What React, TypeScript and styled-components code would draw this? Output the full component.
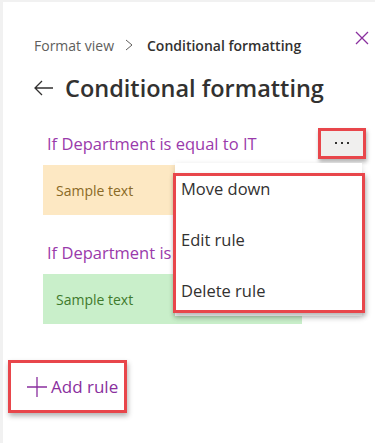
import styled, { createGlobalStyle } from "styled-components";

const Global = createGlobalStyle`
    html, body {
        margin: 0;
        padding: 0;
        background: #f1f1f1;
        font-family: "Open Sans", "Noto Sans", Arial, sans-serif;
    }
`;

const Panel = styled.div`
    position: relative;
    margin: 2px 0 0 3px;
    height: 441px;
    background: #ffffff;
    box-sizing: border-box;
    padding: 30px 0 0 0;
`;

const Crumbs = styled.div`
    display: flex;
    justify-content: space-between;
    align-items: flex-start;
    padding: 0 4px 0 31px;
`;

const Trail = styled.div`
    display: flex;
    align-items: center;
    height: 26px;
    font-size: 14px;
    color: #605e5c;
`;

const Current = styled.span`
    color: #323130;
    font-weight: 600;
`;

const Chevron = styled.svg`
    margin: 0 14px 0 11px;
`;

const Close = styled.button`
    border: none;
    background: none;
    padding: 0;
    margin-top: -1px;
    width: 16px;
    height: 16px;
    display: flex;
`;

const TitleRow = styled.div`
    display: flex;
    align-items: center;
    gap: 11px;
    margin-top: 13px;
    padding-left: 31px;
    height: 34px;
`;

const Title = styled.h1`
    margin: 0;
    font-size: 23.5px;
    font-weight: 600;
    color: #323130;
`;

const Rules = styled.div`
    position: relative;
    margin-top: 22px;
    padding-left: 40px;
`;

const Rule = styled.div`
    margin-bottom: 21px;
`;

const RuleHead = styled.div`
    display: flex;
    align-items: center;
    justify-content: space-between;
    height: 32px;
    padding-right: 9px;
`;

const RuleName = styled.span`
    padding-left: 4px;
    font-size: 16.5px;
    color: #9a3aab;
    white-space: nowrap;
`;

const More = styled.button`
    width: 48px;
    height: 31px;
    box-sizing: border-box;
    border: 3px solid #e8464b;
    background: #f0efee;
    box-shadow: 1px 3px 4px rgba(0, 0, 0, 0.3);
    display: flex;
    align-items: center;
    justify-content: center;
    gap: 4px;
    padding: 0;
`;

const Dot = styled.span`
    width: 2px;
    height: 2px;
    background: #323130;
`;

const Sample = styled.div<{ $bg: string; $fg: string }>`
    margin-top: 6px;
    width: 259px;
    height: 50px;
    display: flex;
    align-items: center;
    padding-left: 13px;
    box-sizing: border-box;
    background: ${(p) => p.$bg};
    color: ${(p) => p.$fg};
    font-size: 14px;
`;

const Menu = styled.div`
    position: absolute;
    top: 36px;
    left: 172px;
    width: 187px;
    background: #ffffff;
    box-shadow: 0 2px 6px rgba(0, 0, 0, 0.15);
`;

const MenuItem = styled.div`
    height: 51px;
    display: flex;
    align-items: center;
    padding-left: 6px;
    font-size: 16.5px;
    color: #323130;
`;

const Mark = styled.div`
    position: absolute;
    top: 10px;
    bottom: 3px;
    left: -2px;
    right: -3px;
    border: 3px solid #e8464b;
    box-shadow: 1px 3px 5px rgba(0, 0, 0, 0.3);
    pointer-events: none;
`;

const AddRule = styled.button`
    margin: 36px 0 0 5px;
    width: 119px;
    height: 53px;
    box-sizing: border-box;
    border: 3px solid #e8464b;
    box-shadow: 1px 3px 5px rgba(0, 0, 0, 0.3);
    background: #ffffff;
    display: flex;
    align-items: center;
    gap: 4px;
    padding: 0 0 0 16px;
    font-family: inherit;
    font-size: 17px;
    white-space: nowrap;
    color: #8a2f9e;
`;

function App() {
    return (
        <>
            <Global />
            <Panel>
                <Crumbs>
                    <Trail>
                        Format view
                        <Chevron width="8" height="12" viewBox="0 0 8 12">
                            <path d="M1 1l6 5-6 5" fill="none" stroke="#605e5c" strokeWidth="1" />
                        </Chevron>
                        <Current>Conditional formatting</Current>
                    </Trail>
                    <Close aria-label="Close">
                        <svg width="14" height="14" viewBox="0 0 14 14">
                            <path d="M1 1l12 12M13 1L1 13" stroke="#8a2f9e" strokeWidth="1.3" />
                        </svg>
                    </Close>
                </Crumbs>
                <TitleRow>
                    <svg width="20" height="16" viewBox="0 0 20 16">
                        <path d="M19 8H1.5M8 1L1 8l7 7" fill="none" stroke="#323130" strokeWidth="1.3" />
                    </svg>
                    <Title>Conditional formatting</Title>
                </TitleRow>
                <Rules>
                    <Rule>
                        <RuleHead>
                            <RuleName>If Department is equal to IT</RuleName>
                            <More aria-label="More">
                                <Dot />
                                <Dot />
                                <Dot />
                            </More>
                        </RuleHead>
                        <Sample $bg="#fde8c3" $fg="#8a6a26">Sample text</Sample>
                    </Rule>
                    <Rule>
                        <RuleHead>
                            <RuleName>If Department is equal to HR</RuleName>
                        </RuleHead>
                        <Sample $bg="#c9efca" $fg="#3f7a2c">Sample text</Sample>
                    </Rule>
                    <Menu>
                        <MenuItem>Move down</MenuItem>
                        <MenuItem>Edit rule</MenuItem>
                        <MenuItem>Delete rule</MenuItem>
                        <Mark />
                    </Menu>
                </Rules>
                <AddRule>
                    <svg width="20" height="20" viewBox="0 0 20 20">
                        <path d="M10 0v20M0 10h20" stroke="#8a2f9e" strokeWidth="1.3" />
                    </svg>
                    Add rule
                </AddRule>
            </Panel>
        </>
    );
}

export default App;
